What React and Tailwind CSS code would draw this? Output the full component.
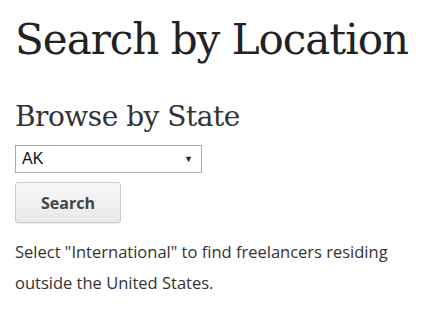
import React from "react";

function App() {
  return (
    <div className="min-h-screen w-full bg-white px-[15px] pt-[15px] font-['Open_Sans',sans-serif]">
      <h1 className="whitespace-nowrap font-['DejaVu_Serif',serif] text-[42px] leading-[50px] tracking-[-1px] text-[#222] font-normal">
        Search by Location
      </h1>
      <h2 className="mt-[35px] whitespace-nowrap font-['DejaVu_Serif',serif] text-[28px] leading-[34px] tracking-[-0.5px] text-[#333] font-light">
        Browse by State
      </h2>
      <div className="relative mt-[11px] w-[187px]">
        <select
          className="block appearance-none w-[187px] h-[28px] border border-[#a9a9a9] bg-white pl-[6px] font-['Liberation_Sans',sans-serif] text-[16px] text-[#111] outline-none"
          defaultValue="AK"
        >
          <option value="AK">AK</option>
          <option value="AL">AL</option>
          <option value="International">International</option>
        </select>
        <span className="pointer-events-none absolute right-[9px] top-[8px] text-[9px] leading-[12px] text-[#222]">
          ▼
        </span>
      </div>
      <button className="mt-[9px] w-[106px] h-[41px] rounded-[3px] border border-[#ccc] bg-gradient-to-b from-[#f7f7f7] to-[#e9e9e9] text-[16px] font-bold text-[#444] shadow-[0_1px_1px_rgba(0,0,0,0.08)]">
        Search
      </button>
      <p className="mt-[13px] text-[16.5px] leading-[31px] text-[#333]">
        Select "International" to find freelancers residing
        <br />
        outside the United States.
      </p>
    </div>
  );
}

export default App;
